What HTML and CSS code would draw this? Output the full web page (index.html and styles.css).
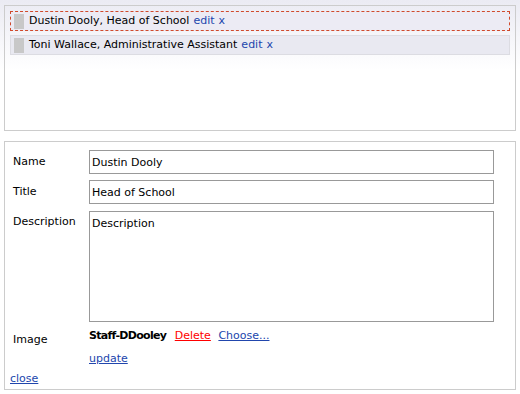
FILE: index.html
```html
<!DOCTYPE html>
<html lang="en">
<head>
    <meta charset="UTF-8">
    <title>Staff</title>
    <link rel="stylesheet" href="styles.css">
</head>
<body>

    <!-- Sortable staff list -->
    <div class="list-panel">
        <ul class="staff-list">
            <li class="staff-item selected">
                <span class="handle"></span>
                <span class="staff-name">Dustin Dooly, Head of School</span>
                <a href="#">edit</a> <a href="#">x</a>
            </li>
            <li class="staff-item">
                <span class="handle"></span>
                <span class="staff-name">Toni Wallace, Administrative Assistant</span>
                <a href="#">edit</a> <a href="#">x</a>
            </li>
        </ul>
    </div>

    <!-- Edit form for the selected person -->
    <div class="edit-panel">
        <form class="staff-form">
            <label class="field-label" for="name">Name</label>
            <input class="field-input" id="name" type="text" value="Dustin Dooly">

            <label class="field-label" for="title">Title</label>
            <input class="field-input" id="title" type="text" value="Head of School">

            <label class="field-label desc-label" for="description">Description</label>
            <textarea class="field-input field-text" id="description">Description</textarea>

            <span class="field-label image-label">Image</span>
            <div class="image-field">
                <b>Staff-DDooley</b>
                <a href="#" class="delete-link">Delete</a>
                <a href="#">Choose...</a>
            </div>

            <span></span>
            <div class="update-row"><a href="#">update</a></div>
        </form>
        <a href="#" class="close-link">close</a>
    </div>

</body>
</html>
```

FILE: styles.css
```css
/* Page */
html, body {
    margin: 0;
}

body {
    padding: 5px 4px;
    background: linear-gradient(#ebebf3, #ffffff 70px) no-repeat;
    font-family: "DejaVu Sans", Verdana, sans-serif;
    font-size: 11px;
    line-height: 14px;
    color: #000;
}

a {
    color: #2146ad;
}

/* Staff list panel */
.list-panel {
    box-sizing: border-box;
    height: 126px;
    border: 1px solid #cccccc;
    padding: 5px;
}

.staff-list {
    list-style-type: none;
    margin: 0;
    padding: 0;
}

.staff-item {
    display: flex;
    align-items: center;
    height: 18px;
    margin-bottom: 4px;
    padding: 0 3px;
    background-color: #e9e9f1;
    border: 1px solid #dcdce2;
}

.staff-item.selected {
    background-color: #ecebf4;
    border: 1px dashed #d04a2c;
}

.handle {
    width: 10px;
    height: 15px;
    margin-right: 5px;
    background-color: #c8c8c8;
}

.staff-name {
    margin-right: 4px;
}

.staff-item a {
    text-decoration: none;
    margin-right: 4px;
}

/* Edit panel */
.edit-panel {
    margin-top: 10px;
    border: 1px solid #cccccc;
    padding: 8px 5px 3px 5px;
}

.staff-form {
    display: grid;
    grid-template-columns: 76px 405px;
    row-gap: 6px;
    padding-left: 3px;
    align-items: center;
}

.field-input {
    box-sizing: border-box;
    width: 405px;
    height: 24px;
    margin: 0;
    padding: 0 2px;
    border: 1px solid #999999;
    font-family: "DejaVu Sans", Verdana, sans-serif;
    font-size: 11px;
    color: #000;
}

.field-text {
    height: 111px;
    margin-top: 1px;
    padding: 5px 2px;
    resize: none;
}

.desc-label {
    align-self: start;
    margin-top: 5px;
}

.image-label {
    align-self: start;
    margin-top: 5px;
}

.image-field {
    align-self: start;
    margin-top: 1px;
}

.image-field b {
    margin-right: 5px;
    letter-spacing: -0.7px;
}

.image-field a {
    margin-right: 4px;
}

.delete-link {
    color: #ff0000;
}

.update-row {
    margin-top: -1px;
}

.close-link {
    display: block;
    margin-top: 6px;
}
```
